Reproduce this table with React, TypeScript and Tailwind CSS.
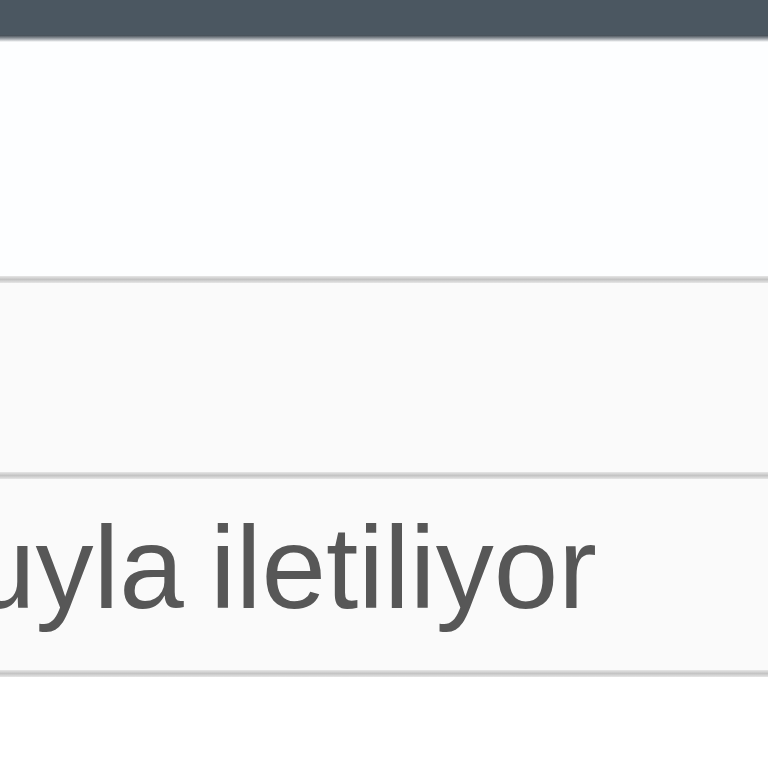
export default function App() {
  return (
    <div className="flex h-[768px] w-[768px] flex-col overflow-hidden bg-[#fdfeff]">
      <header className="h-[35px] shrink-0 bg-[#4b5761]" />
      <div className="h-[7px] shrink-0 bg-linear-to-b from-[#3e4750] to-[#fdfeff]" />
      <div className="h-[234px] shrink-0" />
      <div className="h-[7px] shrink-0 bg-linear-to-b from-[#e6e6e6] via-[#c4c4c4] to-[#e6e6e6]" />
      <section className="h-[189px] shrink-0 bg-[#fafafa]" />
      <div className="h-[7px] shrink-0 bg-linear-to-b from-[#e6e6e6] via-[#c4c4c4] to-[#e6e6e6]" />
      <div className="flex h-[191px] shrink-0 items-start bg-[#fafafa] pt-[31px]">
        <p
          className="-ml-[29px] whitespace-nowrap text-[116px] leading-none text-[#575757] [word-spacing:-6px]"
          style={{ fontFamily: '"Liberation Sans", Arial, sans-serif' }}
        >
          uyla iletiliyor
        </p>
      </div>
      <div className="h-[7px] shrink-0 bg-linear-to-b from-[#e6e6e6] via-[#c4c4c4] to-[#e6e6e6]" />
      <div className="flex-1 bg-white" />
    </div>
  );
}
